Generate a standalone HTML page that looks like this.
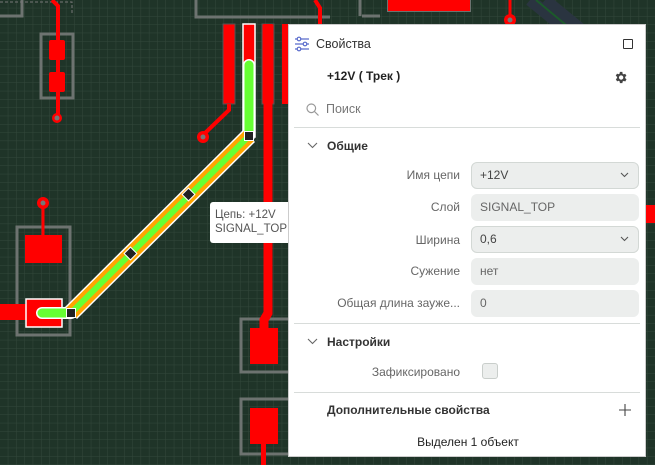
<!DOCTYPE html>
<html><head><meta charset="utf-8"><style>
*{margin:0;padding:0;box-sizing:border-box}
body{width:655px;height:465px;overflow:hidden;background:#1f3428;font-family:"Liberation Sans","Noto Sans CJK SC",sans-serif;position:relative}
svg.bg{position:absolute;left:0;top:0}
.panel{position:absolute;left:288px;top:24px;width:358px;height:433px;background:#fff;border:1px solid #ccc;color:#333;font-size:12px}
.a{position:absolute;white-space:nowrap}
.lbl{position:absolute;right:185px;color:#666;font-size:12px;text-align:right}
.inp{position:absolute;left:182px;width:168px;height:27px;border-radius:6px;background:#eceeed;color:#444;padding-left:9px;line-height:27px;font-size:12px}
.inp.b{border:1px solid #d3d8d5;line-height:25px;padding-left:8px}
.hr{position:absolute;left:5px;right:5px;height:1px;background:#d8dcda}
.chev{position:absolute;right:9px;top:9px}
</style></head><body>
<svg class="bg" width="655" height="465" viewBox="0 0 655 465">
<defs><pattern id="g" width="8.3" height="8.3" patternUnits="userSpaceOnUse"><path d="M8.3 0V8.3H0" fill="none" stroke="#33483b" stroke-width="1"/></pattern></defs>
<rect width="655" height="465" fill="url(#g)"/>
<g fill="none" stroke="#6d7370" stroke-width="3">
<rect x="-5" y="-5" width="27" height="21"/>
<rect x="41" y="34" width="32" height="64"/>
<path d="M196 0V17H330"/>
<rect x="17" y="227" width="53" height="108"/>
<rect x="241" y="319" width="60" height="53"/>
<rect x="241" y="399" width="60" height="55"/>
<path d="M360 0V16M362 16H380"/>
<rect x="388" y="-5" width="82" height="16" stroke-width="2"/>
</g>
<path d="M0 2H72V15" fill="none" stroke="#777" stroke-dasharray="3 2"/>
<path d="M530 0L585 45M545 0L600 45" stroke="#2a3440" stroke-width="12"/>
<path d="M536 0L590 45" stroke="#1c5a2a" stroke-width="2"/>
<g fill="#ff0000">
<path d="M52 0L58 6V118" stroke="#f00" stroke-width="4" fill="none"/>
<rect x="49" y="40" width="16" height="20" rx="2"/>
<rect x="49" y="72" width="16" height="20" rx="2"/>
<circle cx="57" cy="118" r="5"/>
<rect x="223" y="24" width="12" height="80" stroke="#555" stroke-width="1"/>
<path d="M229 104V110L203 135" stroke="#f00" stroke-width="4" fill="none"/>
<circle cx="203" cy="137" r="6"/>
<rect x="262" y="24" width="12" height="80" stroke="#555" stroke-width="1"/>
<rect x="282" y="24" width="12" height="80"/>
<path d="M268 24V313L264 320V330" stroke="#f00" stroke-width="9" fill="none"/>
<rect x="250" y="328" width="28" height="36"/>
<rect x="250" y="408" width="28" height="36"/>
<rect x="261" y="440" width="5" height="25"/>
<path d="M43 203V235" stroke="#f00" stroke-width="3"/>
<circle cx="43" cy="203" r="6"/>
<rect x="25" y="235" width="37" height="28"/>
<rect x="0" y="304" width="30" height="16"/>
<rect x="26" y="299" width="36" height="28" stroke="#fff" stroke-width="1.5"/>
<rect x="388" y="0" width="82" height="11"/>
<path d="M510 0V20" stroke="#f00" stroke-width="3"/>
<circle cx="510" cy="20" r="6"/>
<rect x="645" y="205" width="10" height="18"/>
<path d="M315 0L320 8L320 24" stroke="#f00" stroke-width="4" fill="none"/>
</g>
<g fill="#777"><circle cx="57" cy="118" r="2.5"/><circle cx="203" cy="137" r="2.5"/><circle cx="43" cy="203" r="2.5"/><circle cx="510" cy="20" r="2.5"/></g>
<rect x="243" y="24" width="12" height="113" fill="#f00" stroke="#fff" stroke-width="1.5"/>
<path d="M249 65V136M71 313H42" fill="none" stroke="#fff" stroke-width="12" stroke-linecap="round"/>
<path d="M249 136L71 313" stroke="#fff" stroke-width="17"/>
<path d="M249 136L71 313" stroke="#ffa500" stroke-width="14"/>
<path d="M249 65V136M71 313H42" fill="none" stroke="#66ff33" stroke-width="9" stroke-linecap="round"/>
<path d="M249 136L71 313" stroke="#66ff33" stroke-width="6"/>
<g fill="#222" stroke="#fff" stroke-width="1">
<rect x="244.5" y="131.5" width="9" height="9"/>
<rect x="66.5" y="308.5" width="9" height="9"/>
<rect x="184" y="190" width="9" height="9" transform="rotate(45 188.5 194.5)"/>
<rect x="126" y="249" width="9" height="9" transform="rotate(45 130.5 253.5)"/>
</g>
</svg>
<div class="a" style="left:210px;top:202px;width:84px;height:41px;background:#fff;border-radius:3px;color:#555;font-size:11.5px;line-height:14px;padding:6px 5px">Цепь: +12V<br>SIGNAL_TOP</div>
<div class="panel">
<svg class="a" style="left:6px;top:11px" width="14" height="16" viewBox="0 0 14 16" fill="none" stroke="#5a6ccc" stroke-width="1.2"><path d="M0 3H14M0 8H14M0 13H14"/><circle cx="4" cy="3" r="1.8" fill="#fff"/><circle cx="10" cy="8" r="1.8" fill="#fff"/><circle cx="4" cy="13" r="1.8" fill="#fff"/></svg>
<div class="a" style="left:27px;top:12px;font-size:12.5px;color:#333">Свойства</div>
<div class="a" style="left:334px;top:14px;width:10px;height:10px;border:1.3px solid #333;border-radius:1px"></div>
<div class="a" style="left:38px;top:44px;font-weight:bold;font-size:12px;color:#222">+12V ( Трек )</div>
<svg class="a" style="left:324px;top:45px" width="15" height="15" viewBox="0 0 24 24"><path fill="#444" d="M19.4 13a7.5 7.5 0 000-2l2.1-1.6-2-3.5-2.5 1a7 7 0 00-1.7-1L15 3h-4l-.4 2.7a7 7 0 00-1.7 1l-2.5-1-2 3.5L6.6 11a7.5 7.5 0 000 2l-2.1 1.6 2 3.5 2.5-1a7 7 0 001.7 1L11 21h4l.4-2.7a7 7 0 001.7-1l2.5 1 2-3.5zM13 15.5a3.5 3.5 0 110-7 3.5 3.5 0 010 7z"/></svg>
<svg class="a" style="left:17px;top:78px" width="13" height="13" viewBox="0 0 13 13" fill="none" stroke="#999" stroke-width="1.2"><circle cx="5.3" cy="5.3" r="4.3"/><path d="M8.5 8.5L12.5 12.5"/></svg>
<div class="a" style="left:37px;top:77px;color:#777;font-size:12.5px">Поиск</div>
<div class="hr" style="top:102px"></div>
<svg class="a" style="left:18px;top:117px" width="11" height="7"><path d="M1 1L5.5 5.5L10 1" fill="none" stroke="#666" stroke-width="1.1"/></svg>
<div class="a" style="left:38px;top:114px;font-weight:bold;color:#333">Общие</div>
<div class="lbl" style="top:143px">Имя цепи</div>
<div class="inp b" style="top:137px">+12V<svg class="chev" width="9" height="6"><path d="M1 1L4.5 4.5L8 1" fill="none" stroke="#555" stroke-width="1.1"/></svg></div>
<div class="lbl" style="top:175px">Слой</div>
<div class="inp" style="top:169px;color:#666">SIGNAL_TOP</div>
<div class="lbl" style="top:208px">Ширина</div>
<div class="inp b" style="top:201px">0,6<svg class="chev" width="9" height="6"><path d="M1 1L4.5 4.5L8 1" fill="none" stroke="#555" stroke-width="1.1"/></svg></div>
<div class="lbl" style="top:239px">Сужение</div>
<div class="inp" style="top:233px;color:#666">нет</div>
<div class="lbl" style="top:271px">Общая длина зауже...</div>
<div class="inp" style="top:265px;color:#666">0</div>
<div class="hr" style="top:298px"></div>
<svg class="a" style="left:18px;top:313px" width="11" height="7"><path d="M1 1L5.5 5.5L10 1" fill="none" stroke="#666" stroke-width="1.1"/></svg>
<div class="a" style="left:38px;top:310px;font-weight:bold;color:#333">Настройки</div>
<div class="lbl" style="top:340px">Зафиксировано</div>
<div class="a" style="left:193px;top:338px;width:16px;height:16px;border:1px solid #c9cecb;border-radius:3px;background:#eceeed"></div>
<div class="hr" style="top:367px"></div>
<div class="a" style="left:38px;top:378px;font-weight:bold;color:#333">Дополнительные свойства</div>
<svg class="a" style="left:330px;top:379px" width="12" height="12"><path d="M6 0V12M0 6H12" stroke="#444" stroke-width="1.1"/></svg>
<div class="a" style="left:0;width:358px;text-align:center;top:410px;color:#222">Выделен 1 объект</div>
</div>
</body></html>
